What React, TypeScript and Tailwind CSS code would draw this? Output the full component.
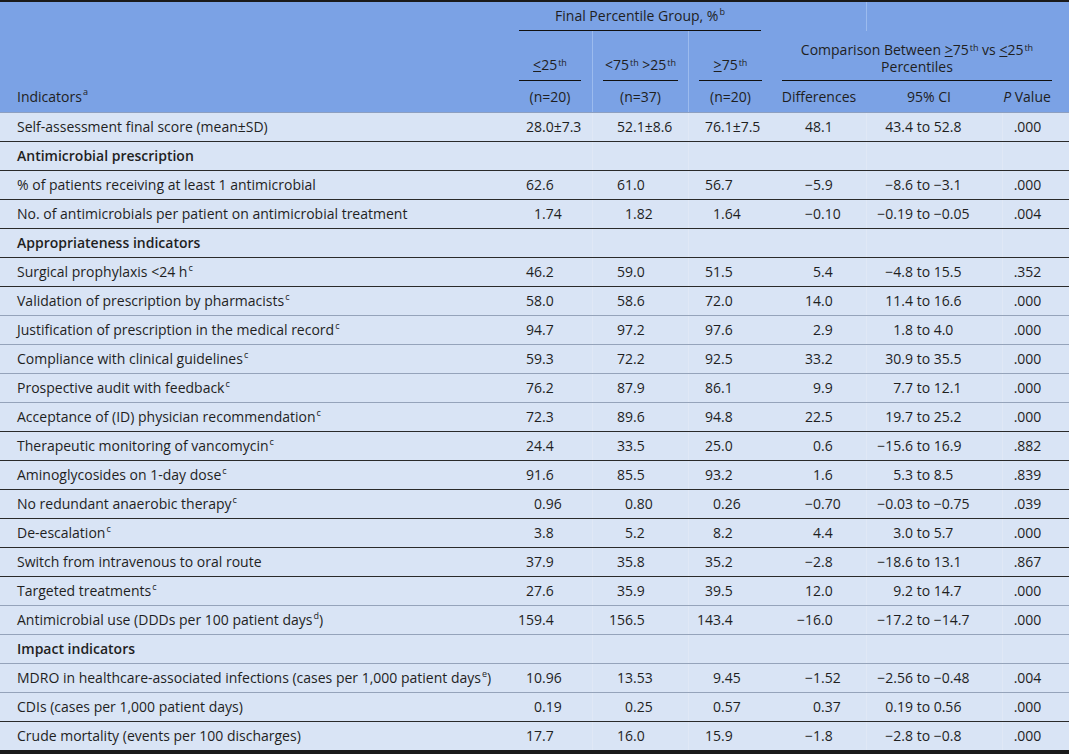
import React from 'react';

type Line = 'dark' | 'gray' | 'last';

type Row = {
  label: React.ReactNode;
  section?: boolean;
  vals?: [string, string, string, string];
  ci?: [string, string];
  p?: string;
  line: Line;
};

const Sup = ({ children }: { children: React.ReactNode }) => (
  <sup className="text-[9px] ml-[1px]">{children}</sup>
);

const rows: Row[] = [
  { label: 'Self-assessment final score (mean±SD)', vals: ['28.0±7.3', '52.1±8.6', '76.1±7.5', '48.1'], ci: ['43.4', '52.8'], p: '.000', line: 'dark' },
  { label: 'Antimicrobial prescription', section: true, line: 'dark' },
  { label: '% of patients receiving at least 1 antimicrobial', vals: ['62.6', '61.0', '56.7', '−5.9'], ci: ['−8.6', '−3.1'], p: '.000', line: 'dark' },
  { label: 'No. of antimicrobials per patient on antimicrobial treatment', vals: ['1.74', '1.82', '1.64', '−0.10'], ci: ['−0.19', '−0.05'], p: '.004', line: 'dark' },
  { label: 'Appropriateness indicators', section: true, line: 'dark' },
  { label: <>Surgical prophylaxis &lt;24 h<Sup>c</Sup></>, vals: ['46.2', '59.0', '51.5', '5.4'], ci: ['−4.8', '15.5'], p: '.352', line: 'dark' },
  { label: <>Validation of prescription by pharmacists<Sup>c</Sup></>, vals: ['58.0', '58.6', '72.0', '14.0'], ci: ['11.4', '16.6'], p: '.000', line: 'gray' },
  { label: <>Justification of prescription in the medical record<Sup>c</Sup></>, vals: ['94.7', '97.2', '97.6', '2.9'], ci: ['1.8', '4.0'], p: '.000', line: 'gray' },
  { label: <>Compliance with clinical guidelines<Sup>c</Sup></>, vals: ['59.3', '72.2', '92.5', '33.2'], ci: ['30.9', '35.5'], p: '.000', line: 'gray' },
  { label: <>Prospective audit with feedback<Sup>c</Sup></>, vals: ['76.2', '87.9', '86.1', '9.9'], ci: ['7.7', '12.1'], p: '.000', line: 'gray' },
  { label: <>Acceptance of (ID) physician recommendation<Sup>c</Sup></>, vals: ['72.3', '89.6', '94.8', '22.5'], ci: ['19.7', '25.2'], p: '.000', line: 'dark' },
  { label: <>Therapeutic monitoring of vancomycin<Sup>c</Sup></>, vals: ['24.4', '33.5', '25.0', '0.6'], ci: ['−15.6', '16.9'], p: '.882', line: 'dark' },
  { label: <>Aminoglycosides on 1-day dose<Sup>c</Sup></>, vals: ['91.6', '85.5', '93.2', '1.6'], ci: ['5.3', '8.5'], p: '.839', line: 'dark' },
  { label: <>No redundant anaerobic therapy<Sup>c</Sup></>, vals: ['0.96', '0.80', '0.26', '−0.70'], ci: ['−0.03', '−0.75'], p: '.039', line: 'dark' },
  { label: <>De-escalation<Sup>c</Sup></>, vals: ['3.8', '5.2', '8.2', '4.4'], ci: ['3.0', '5.7'], p: '.000', line: 'dark' },
  { label: 'Switch from intravenous to oral route', vals: ['37.9', '35.8', '35.2', '−2.8'], ci: ['−18.6', '13.1'], p: '.867', line: 'dark' },
  { label: <>Targeted treatments<Sup>c</Sup></>, vals: ['27.6', '35.9', '39.5', '12.0'], ci: ['9.2', '14.7'], p: '.000', line: 'gray' },
  { label: <>Antimicrobial use (DDDs per 100 patient days<Sup>d</Sup>)</>, vals: ['159.4', '156.5', '143.4', '−16.0'], ci: ['−17.2', '−14.7'], p: '.000', line: 'gray' },
  { label: 'Impact indicators', section: true, line: 'gray' },
  { label: <>MDRO in healthcare-associated infections (cases per 1,000 patient days<Sup>e</Sup>)</>, vals: ['10.96', '13.53', '9.45', '−1.52'], ci: ['−2.56', '−0.48'], p: '.004', line: 'gray' },
  { label: 'CDIs (cases per 1,000 patient days)', vals: ['0.19', '0.25', '0.57', '0.37'], ci: ['0.19', '0.56'], p: '.000', line: 'dark' },
  { label: 'Crude mortality (events per 100 discharges)', vals: ['17.7', '16.0', '15.9', '−1.8'], ci: ['−2.8', '−0.8'], p: '.000', line: 'last' },
];

// integer part in a fixed box so the decimal points line up
const Dec = ({ v, box }: { v: string; box: string }) => {
  const i = v.indexOf('.');
  return (
    <div className="flex">
      <span className={`${box} shrink-0 text-right`}>{v.slice(0, i)}</span>
      <span>{v.slice(i)}</span>
    </div>
  );
};

const lineClass: Record<Line, string> = {
  dark: 'h-[29px] border-b border-[#2a2a2a]',
  gray: 'h-[29px] border-b border-[#95a3ba]',
  last: 'h-[32px] border-b-[4px] border-[#1a1a1a]',
};

const cols = 'grid grid-cols-[505px_87px_96px_84px_94px_136px_67px]';

const Header = () => (
  <div className={`${cols} grid-rows-[29px_50px_31px] bg-[#7ba2e5] border-t-2 border-[#1a1a1a] border-b border-b-[#8d9fc0]`}>
    <div className="col-start-1 row-start-3 flex items-center pl-[17px]">
      Indicators<Sup>a</Sup>
    </div>

    <div className="col-start-2 col-span-3 row-start-1 ml-[14px] mr-[11px] flex items-center justify-center border-b border-[#111]">
      Final Percentile Group, %<Sup>b</Sup>
    </div>
    <div className="col-start-6 row-start-1 border-l border-[#9cbbee]" />

    <div className="col-start-2 row-start-2 row-span-2 flex flex-col">
      <div className="h-[50px] ml-[14px] mr-[11px] flex items-end justify-center pb-[6px] border-b border-[#111]">
        <span><span className="underline underline-offset-1">&lt;</span>25<Sup>th</Sup></span>
      </div>
      <div className="flex-1 ml-[14px] mr-[11px] flex items-center justify-center">(n=20)</div>
    </div>
    <div className="col-start-3 row-start-2 row-span-2 flex flex-col border-l border-[#9cbbee]">
      <div className="h-[50px] mx-[10px] flex items-end justify-center pb-[6px] border-b border-[#111]">
        <span>&lt;75<Sup>th</Sup> &gt;25<Sup>th</Sup></span>
      </div>
      <div className="flex-1 mx-[10px] flex items-center justify-center">(n=37)</div>
    </div>
    <div className="col-start-4 row-start-2 row-span-2 flex flex-col border-l border-[#9cbbee]">
      <div className="h-[50px] mx-[10px] flex items-end justify-center pb-[6px] border-b border-[#111]">
        <span><span className="underline underline-offset-1">&gt;</span>75<Sup>th</Sup></span>
      </div>
      <div className="flex-1 mx-[10px] flex items-center justify-center">(n=20)</div>
    </div>

    <div className="col-start-5 col-span-3 row-start-2 ml-[10px] mr-[17px] flex items-end justify-center pb-[5px] border-b border-[#111] text-center leading-[17px]">
      <span>
        Comparison Between <span className="underline underline-offset-1">&gt;</span>75<Sup>th</Sup> vs <span className="underline underline-offset-1">&lt;</span>25<Sup>th</Sup>
        <br />
        Percentiles
      </span>
    </div>
    <div className="col-start-5 row-start-3 flex items-center justify-center">Differences</div>
    <div className="col-start-6 row-start-3 flex items-center justify-center pr-[10px]">95% CI</div>
    <div className="col-start-7 row-start-3 flex items-center justify-center pr-[17px]">
      <span><i>P</i> Value</span>
    </div>
  </div>
);

const BodyRow = ({ r }: { r: Row }) => (
  <div className={`${cols} items-stretch ${lineClass[r.line]}`}>
    <div className={`flex items-center pl-[17px] whitespace-nowrap ${r.section ? 'font-semibold' : ''}`}>{r.label}</div>
    <div className="flex items-center">{r.vals && <Dec v={r.vals[0]} box="w-[37px]" />}</div>
    <div className="flex items-center border-l border-[#e0e8f6]">{r.vals && <Dec v={r.vals[1]} box="w-[40px]" />}</div>
    <div className="flex items-center border-l border-[#e0e8f6]">{r.vals && <Dec v={r.vals[2]} box="w-[32px]" />}</div>
    <div className="flex items-center">{r.vals && <Dec v={r.vals[3]} box="w-[49px]" />}</div>
    <div className="flex items-center border-l border-[#e0e8f6]">
      {r.ci && (
        <div className="flex">
          <span className="w-[46px] shrink-0 text-right">{r.ci[0]}</span>
          <span className="whitespace-pre"> to {r.ci[1]}</span>
        </div>
      )}
    </div>
    <div className="flex items-center justify-center pr-[17px] border-l border-[#e0e8f6]">{r.p}</div>
  </div>
);

const App: React.FC = () => {
  return (
    <div className="w-[1069px] bg-white font-['Open_Sans','Liberation_Sans',sans-serif] text-[14px] leading-[18px] text-[#1f1f1f]">
      <Header />
      <div className="bg-[#d9e4f5]">
        {rows.map((r, i) => (
          <BodyRow key={i} r={r} />
        ))}
      </div>
    </div>
  );
};

export default App;
